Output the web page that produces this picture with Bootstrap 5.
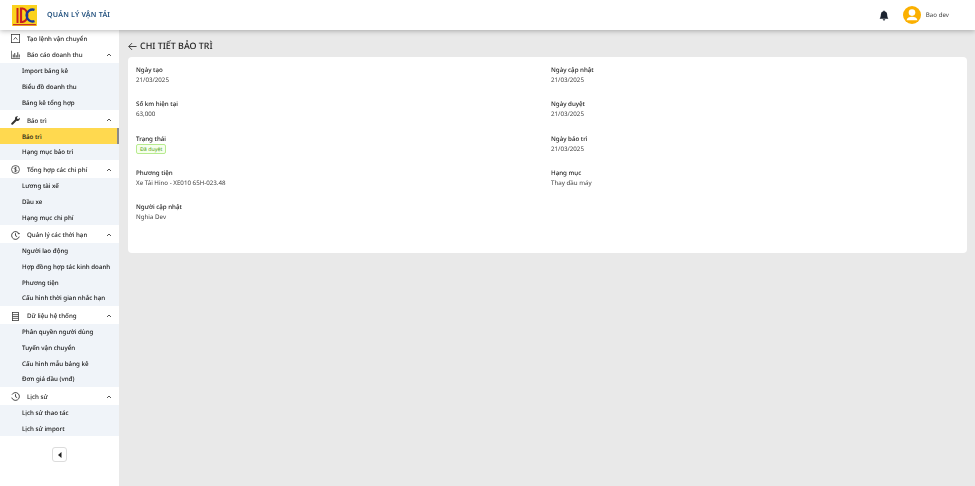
<!DOCTYPE html>
<html lang="vi">
<head>
<meta charset="utf-8">
<title>Chi tiết bảo trì</title>
<link href="https://cdn.jsdelivr.net/npm/bootstrap@5.3.0/dist/css/bootstrap.min.css" rel="stylesheet">
<style>
html,body{height:100%;}
body{font-family:"Noto Sans","Open Sans",sans-serif;font-size:6.2px;background:#e9e9e9;color:#333;overflow:hidden;text-rendering:geometricPrecision;}
.app-top{height:30px;background:#fff;box-shadow:0 1px 5px rgba(0,0,0,.28);position:relative;z-index:2;}
.brand-cell{width:119px;padding-left:12px;}
.brand-text{font-size:7.1px;font-weight:600;color:#24527f;letter-spacing:.2px;margin-left:10px;white-space:nowrap;}
.bell-cell{margin-right:6px;}
.user-name{font-size:6.2px;color:#444;margin-left:5px;margin-right:26px;}
.avatar{width:18px;height:18px;border-radius:50%;background:#fbb000;overflow:hidden;}
.app-body{height:456px;}
.side{width:119px;background:#fff;flex:none;}
.side-head{height:18.3px;padding:2px 7px 0 11px;color:#1c1c1c;font-weight:500;}
.side-head svg.ic{width:9px;height:9px;margin-right:7px;flex:none;}
.side-head span{flex:1;white-space:nowrap;}
.side-first{height:14.85px;padding-top:3px;}
.sub-wrap{background:#f0f4f9;}
.sub-link{height:15.67px;padding-left:22px;color:#111;font-weight:500;white-space:nowrap;display:flex;align-items:center;text-decoration:none;}
.sub-on{background:#ffd94f;border-right:2px solid #8a8a8a;}
.collapse-btn{width:15px;height:15px;background:#fff;border:1px solid #dcdcdc;border-radius:3px;padding:0;margin:11px auto 0;}
.main-area{padding:8px 8px 0 9px;}
.page-title{font-size:8.9px;font-weight:500;color:#1c1c1c;height:19px;padding-bottom:2px;margin:0;}
.page-title svg{width:9px;height:9px;margin-right:3px;}
.info-card{background:#fff;border-radius:4px;height:196px;padding:8px 1px 8px 8px;}
.info-cell{height:34.25px;}
.lab{font-weight:500;color:#1c1c1c;line-height:10px;}
.val{color:#444;line-height:10px;}
.tag-ok{display:inline-block;border:1px solid #b7eb8f;background:#f6ffed;color:#52a414;font-size:5.3px;line-height:8px;padding:0 3px;border-radius:2px;}
.brand-text,.user-name,.side-head span,.sub-link,.page-title,.lab,.val{will-change:opacity;}
</style>
</head>
<body>
<header class="app-top d-flex align-items-center">
  <div class="brand-cell d-flex align-items-center">
    <svg width="25" height="21" viewBox="0 0 25 21"><rect width="25" height="21" fill="#fbd21e"/><rect x="1" y="19" width="23" height="1.3" fill="#c8322a"/><rect x="4.5" y="3" width="2" height="15" fill="#c8201e"/><path d="M9 3.5h1.5a5.5 6.8 0 0 1 0 13.5H9z" fill="none" stroke="#c8201e" stroke-width="2.2"/><path d="M22.5 4.8a6 6 0 1 0 0 11.4" fill="none" stroke="#17389a" stroke-width="2.4"/></svg>
    <span class="brand-text">QUẢN LÝ VẬN TẢI</span>
  </div>
  <div class="ms-auto d-flex align-items-center">
    <div class="bell-cell d-flex"><svg width="10" height="11" viewBox="0 0 16 16" fill="#1c2430"><path d="M8 16a2 2 0 0 0 2-2H6a2 2 0 0 0 2 2zm.995-14.901a1 1 0 1 0-1.99 0A5 5 0 0 0 3 6c0 1.098-.5 6-2 7h14c-1.5-1-2-5.902-2-7 0-2.42-1.72-4.44-4.005-4.901z"/></svg></div>
    <div class="avatar ms-2"><svg width="18" height="18" viewBox="0 0 18 18" fill="#fff"><circle cx="9" cy="6.6" r="3.3"/><path d="M3.6 14.2c.5-2.5 2.6-3.4 5.4-3.4s4.9.9 5.4 3.4z"/></svg></div>
    <span class="user-name">Bao dev</span>
  </div>
</header>
<div class="app-body d-flex">
  <nav class="side">
    <div class="side-head side-first d-flex align-items-center"><svg class="ic" viewBox="0 0 12 12" fill="none" stroke="#333"><rect x=".5" y=".5" width="11" height="11"/><path d="M3.5 7.5 6 4.5l2.5 3"/></svg><span>Tạo lệnh vận chuyển</span></div>
    <div class="side-head d-flex align-items-center"><svg class="ic" viewBox="0 0 12 12" fill="none" stroke="#333"><path d="M.5 1v10.5H12"/><path d="M3 10V6M5 10V4M7 10V7M9 10V3M11 10V6" stroke-width="1.2"/></svg><span>Báo cáo doanh thu</span><svg width="6" height="4" viewBox="0 0 6 4" fill="none" stroke="#555"><path d="M1 3l2-2 2 2"/></svg></div>
    <div class="sub-wrap">
      <a class="sub-link">Import bảng kê</a>
      <a class="sub-link">Biểu đồ doanh thu</a>
      <a class="sub-link">Bảng kê tổng hợp</a>
    </div>
    <div class="side-head d-flex align-items-center"><svg class="ic" viewBox="0 0 12 12" fill="#333"><path d="M11.5 2.4 9.8 4 8.2 3.7 7.9 2.1 9.5.5A3 3 0 0 0 5.6 4.4L.7 9.3a1.3 1.3 0 0 0 1.9 1.9l4.9-4.9a3 3 0 0 0 4-3.9z"/></svg><span>Bảo trì</span><svg width="6" height="4" viewBox="0 0 6 4" fill="none" stroke="#555"><path d="M1 3l2-2 2 2"/></svg></div>
    <div class="sub-wrap">
      <a class="sub-link sub-on">Bảo trì</a>
      <a class="sub-link">Hạng mục bảo trì</a>
    </div>
    <div class="side-head d-flex align-items-center"><svg class="ic" viewBox="0 0 12 12" fill="none" stroke="#333"><circle cx="6" cy="6" r="5.3"/><path d="M7.8 4.2C7.4 3.4 4.4 3.2 4.3 4.7 4.2 6.3 7.9 5.7 7.8 7.4 7.7 8.9 4.6 8.7 4.2 7.8M6 2.4v7.2" stroke-width=".9"/></svg><span>Tổng hợp các chi phí</span><svg width="6" height="4" viewBox="0 0 6 4" fill="none" stroke="#555"><path d="M1 3l2-2 2 2"/></svg></div>
    <div class="sub-wrap">
      <a class="sub-link">Lương tài xế</a>
      <a class="sub-link">Dầu xe</a>
      <a class="sub-link">Hạng mục chi phí</a>
    </div>
    <div class="side-head d-flex align-items-center"><svg class="ic" viewBox="0 0 12 12" fill="none" stroke="#333" stroke-width="1.2"><path d="M10.6 3.5A5.2 5.2 0 1 0 11 7.5"/><path d="M6 3v3.3l2.2 1.2M9 3.5h2.6"/></svg><span>Quản lý các thời hạn</span><svg width="6" height="4" viewBox="0 0 6 4" fill="none" stroke="#555"><path d="M1 3l2-2 2 2"/></svg></div>
    <div class="sub-wrap">
      <a class="sub-link">Người lao động</a>
      <a class="sub-link">Hợp đồng hợp tác kinh doanh</a>
      <a class="sub-link">Phương tiện</a>
      <a class="sub-link">Cấu hình thời gian nhắc hạn</a>
    </div>
    <div class="side-head d-flex align-items-center"><svg class="ic" viewBox="0 0 12 12" fill="none" stroke="#333"><rect x="2" y=".5" width="8" height="11"/><path d="M2 3.5h8M2 6h8M2 8.5h8"/></svg><span>Dữ liệu hệ thống</span><svg width="6" height="4" viewBox="0 0 6 4" fill="none" stroke="#555"><path d="M1 3l2-2 2 2"/></svg></div>
    <div class="sub-wrap">
      <a class="sub-link">Phân quyền người dùng</a>
      <a class="sub-link">Tuyến vận chuyển</a>
      <a class="sub-link">Cấu hình mẫu bảng kê</a>
      <a class="sub-link">Đơn giá dầu (vnđ)</a>
    </div>
    <div class="side-head d-flex align-items-center"><svg class="ic" viewBox="0 0 12 12" fill="none" stroke="#333" stroke-width="1.2"><path d="M1.4 3.5A5.2 5.2 0 1 1 1 7.5"/><path d="M6 3v3.3l2.2 1.2"/></svg><span>Lịch sử</span><svg width="6" height="4" viewBox="0 0 6 4" fill="none" stroke="#555"><path d="M1 3l2-2 2 2"/></svg></div>
    <div class="sub-wrap">
      <a class="sub-link">Lịch sử thao tác</a>
      <a class="sub-link">Lịch sử import</a>
    </div>
    <button class="collapse-btn d-flex align-items-center justify-content-center" type="button"><svg width="4" height="6" viewBox="0 0 4 6" fill="#222"><path d="M3.5 0v6L0 3z"/></svg></button>
  </nav>
  <main class="main-area flex-grow-1">
    <h1 class="page-title d-flex align-items-center"><svg viewBox="0 0 10 10" fill="none" stroke="#333" stroke-width="1"><path d="M9.5 5H1M4.5 1.2.8 5l3.7 3.8"/></svg>CHI TIẾT BẢO TRÌ</h1>
    <section class="info-card">
      <div class="row g-0">
        <div class="col-6 info-cell"><div class="lab">Ngày tạo</div><div class="val">21/03/2025</div></div>
        <div class="col-6 info-cell"><div class="lab">Ngày cập nhật</div><div class="val">21/03/2025</div></div>
        <div class="col-6 info-cell"><div class="lab">Số km hiện tại</div><div class="val">63,000</div></div>
        <div class="col-6 info-cell"><div class="lab">Ngày duyệt</div><div class="val">21/03/2025</div></div>
        <div class="col-6 info-cell"><div class="lab">Trạng thái</div><div class="val"><span class="tag-ok">Đã duyệt</span></div></div>
        <div class="col-6 info-cell"><div class="lab">Ngày bảo trì</div><div class="val">21/03/2025</div></div>
        <div class="col-6 info-cell"><div class="lab">Phương tiện</div><div class="val">Xe Tải Hino - XE010 65H-023.48</div></div>
        <div class="col-6 info-cell"><div class="lab">Hạng mục</div><div class="val">Thay dầu máy</div></div>
        <div class="col-6 info-cell"><div class="lab">Người cập nhật</div><div class="val">Nghia Dev</div></div>
      </div>
    </section>
  </main>
</div>
<script src="https://cdn.jsdelivr.net/npm/bootstrap@5.3.0/dist/js/bootstrap.bundle.min.js"></script>
</body>
</html>
